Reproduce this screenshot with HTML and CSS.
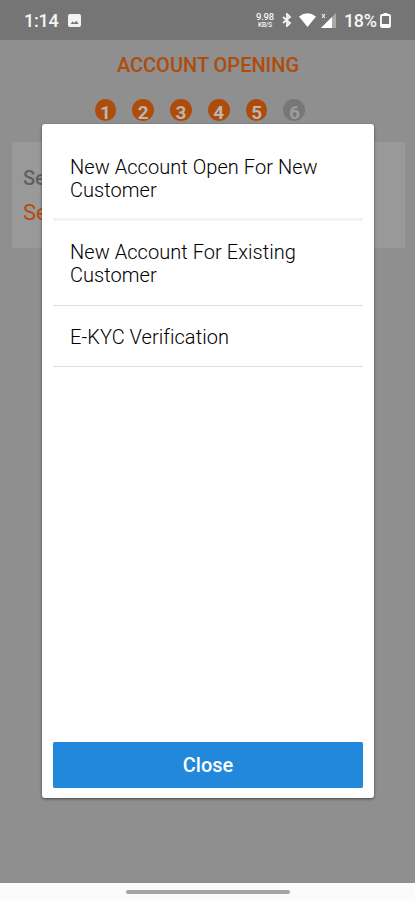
FILE: index.html
```html
<!DOCTYPE html>
<html lang="en">
<head>
<meta charset="utf-8">
<title>Account Opening</title>
<link rel="stylesheet" href="styles.css">
</head>
<body>
<div class="screen">
  <header class="status">
    <span class="time">1:14</span>
    <svg class="photo" width="13" height="13" viewBox="0 0 13 13"><rect width="13" height="13" rx="2" fill="#f2f2f2"/><path d="M2.5 10 4.8 7.2l1.5 1.7L8.2 6.7l2.5 3.3z" fill="#777"/></svg>
    <span class="speed"><span>9.98</span><span class="unit">KB/S</span></span>
    <svg class="bluetooth" width="10" height="14" viewBox="0 0 10 14" fill="none" stroke="#f2f2f2" stroke-width="1.8"><path d="M1 4l7 6-3 3V1l3 3-7 6"/></svg>
    <svg class="wifi" width="17" height="14" viewBox="0 0 17 14"><path d="M0 3.5Q8.5-3 17 3.5L8.5 14z" fill="#fff"/></svg>
    <svg class="signal" width="15" height="15" viewBox="0 0 15 15"><path d="M0 15 15 0v15z" fill="#aaa"/><path d="M0 15 11 4v11z" fill="#fff"/><path d="M1 1l3 4M4 1L1 5" stroke="#eee" stroke-width="1.2"/></svg>
    <span class="percent">18%</span>
    <svg class="battery" width="11" height="15" viewBox="0 0 11 15"><path d="M3.5 0h4v2h-4z" fill="#fff"/><rect x="1" y="2" width="9" height="12" rx="1" fill="none" stroke="#fff" stroke-width="1.8"/><path d="M1 11h9v3H1z" fill="#fff"/></svg>
  </header>
  <main class="page">
    <h1>ACCOUNT OPENING</h1>
    <ol class="steps">
      <li>1</li><li>2</li><li>3</li><li>4</li><li>5</li><li class="pending">6</li>
    </ol>
    <section class="card">
      <div class="label">Se</div>
      <div class="value">Se</div>
    </section>
  </main>
  <footer class="nav"><div class="handle"></div></footer>
  <div class="dialog" role="dialog">
    <ul class="options">
      <li>New Account Open For New<br>Customer</li>
      <li>New Account For Existing<br>Customer</li>
      <li>E-KYC Verification</li>
    </ul>
    <button class="close">Close</button>
  </div>
</div>
</body>
</html>
```
FILE: styles.css
```css
* { box-sizing: border-box; }
body { margin: 0; font-family: Roboto, "Liberation Sans", sans-serif; }
.screen {
  position: relative;
  display: flex;
  flex-direction: column;
  width: 415px;
  height: 900px;
  overflow: hidden;
  background: #8f8f8f;
}
.status {
  display: flex;
  align-items: center;
  height: 40px;
  padding: 0 24px 0 24px;
  background: #757575;
  color: #f5f5f5;
  font-size: 18px;
  font-weight: 500;
}
.time { width: 35px; letter-spacing: -0.2px; }
.photo { margin-left: 9px; }
.speed {
  display: flex;
  flex-direction: column;
  align-items: center;
  width: 18px;
  margin-left: auto;
  font-size: 9.5px;
  line-height: 10px;
  letter-spacing: -0.2px;
}
.unit { font-size: 6.5px; line-height: 7px; }
.bluetooth { margin-left: 8px; }
.wifi { margin-left: 7px; }
.signal { margin-left: 5px; }
.percent { width: 32px; margin-left: 8px; letter-spacing: -0.4px; }
.battery { margin-left: 4px; }
.page { flex: 1; }
h1 {
  margin: 0;
  padding: 13px 0 1px 1px;
  color: #ae4c0b;
  font-size: 20px;
  font-weight: 500;
  line-height: 24px;
  text-align: center;
}
.steps {
  display: flex;
  gap: 16px;
  margin: 21px 0 0 94.5px;
  padding: 0;
  list-style: none;
}
.steps li {
  width: 21.8px;
  height: 22px;
  border-radius: 50%;
  background: #ae4c0b;
  color: #bcb5b0;
  font-size: 19px;
  font-weight: 700;
  line-height: 27px;
  text-align: center;
}
.steps .pending { background: #777; color: #9c9c9c; }
.card {
  height: 106px;
  margin: 21px 10px 0 12px;
  padding: 24px 11px;
  background: #999;
  font-size: 20px;
}
.label { color: #5c6165; font-weight: 500; line-height: 24px; }
.value { margin-top: 11px; color: #b34b0d; font-size: 22px; line-height: 24px; }
.nav { height: 17px; padding-top: 7px; background: #fbfbfb; }
.handle { width: 164px; height: 4px; margin-left: 126px; border-radius: 2px; background: #a5a5a5; }
.dialog {
  position: absolute;
  top: 124px;
  left: 42px;
  display: flex;
  flex-direction: column;
  justify-content: space-between;
  width: 332px;
  height: 674px;
  padding: 0 11px 10px;
  border-radius: 3px;
  background: #fff;
  box-shadow: 0 1px 3px rgba(0, 0, 0, .5);
}
.options {
  margin: 0;
  padding: 0;
  list-style: none;
  color: #000;
  font-size: 20px;
  font-weight: 300;
  line-height: 23px;
  letter-spacing: 0.05px;
}
.options li { padding: 20px 17px 18px; border-bottom: 1px solid #ddd; }
.options li:first-child { padding: 32px 17px 16px; border-bottom: 3px solid #f3f3f3; }
.options li:last-child { padding-bottom: 17px; }
.close {
  height: 46px;
  padding: 0;
  border: 0;
  border-radius: 2px;
  background: #2188dc;
  box-shadow: inset 0 0 1px #0867c0;
  color: #fff;
  font-family: inherit;
  font-size: 20px;
  font-weight: 500;
}
```
